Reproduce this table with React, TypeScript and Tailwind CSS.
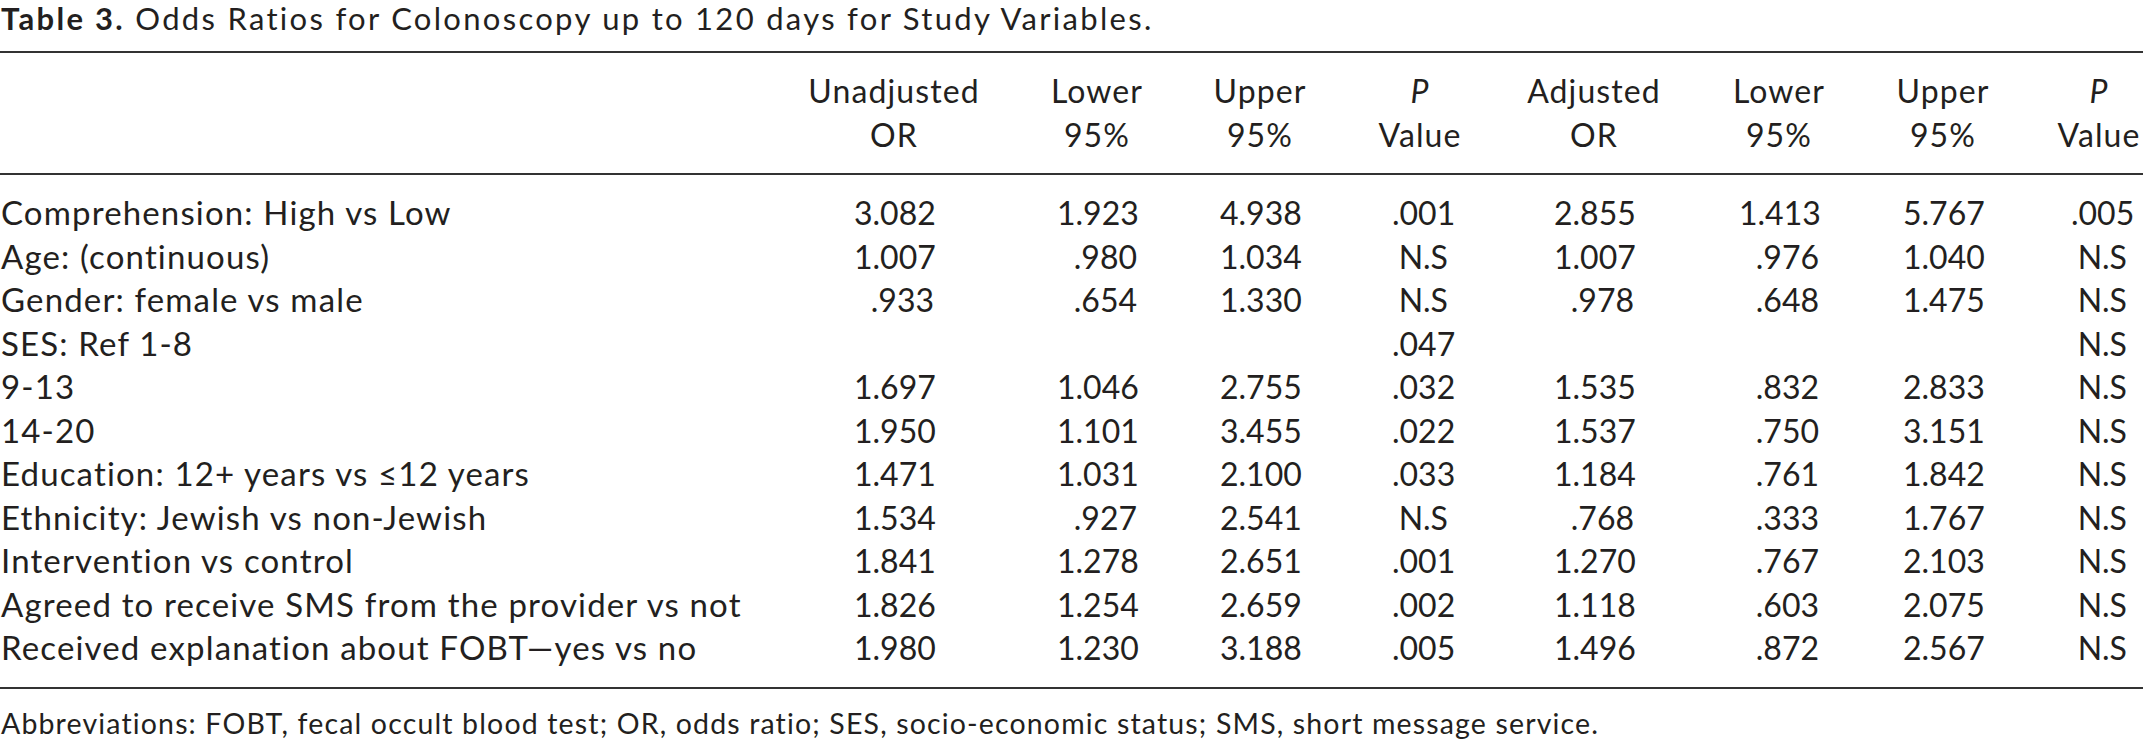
const rows: [string, string[]][] = [
  ['Comprehension: High vs Low', ['3.082', '1.923', '4.938', '.001', '2.855', '1.413', '5.767', '.005']],
  ['Age: (continuous)', ['1.007', '.980', '1.034', 'N.S', '1.007', '.976', '1.040', 'N.S']],
  ['Gender: female vs male', ['.933', '.654', '1.330', 'N.S', '.978', '.648', '1.475', 'N.S']],
  ['SES: Ref 1-8', ['', '', '', '.047', '', '', '', 'N.S']],
  ['9-13', ['1.697', '1.046', '2.755', '.032', '1.535', '.832', '2.833', 'N.S']],
  ['14-20', ['1.950', '1.101', '3.455', '.022', '1.537', '.750', '3.151', 'N.S']],
  ['Education: 12+ years vs \u226412 years', ['1.471', '1.031', '2.100', '.033', '1.184', '.761', '1.842', 'N.S']],
  ['Ethnicity: Jewish vs non-Jewish', ['1.534', '.927', '2.541', 'N.S', '.768', '.333', '1.767', 'N.S']],
  ['Intervention vs control', ['1.841', '1.278', '2.651', '.001', '1.270', '.767', '2.103', 'N.S']],
  ['Agreed to receive SMS from the provider vs not', ['1.826', '1.254', '2.659', '.002', '1.118', '.603', '2.075', 'N.S']],
  ['Received explanation about FOBT\u2014yes vs no', ['1.980', '1.230', '3.188', '.005', '1.496', '.872', '2.567', 'N.S']],
];

const headers: [string, string][] = [
  ['Unadjusted', 'OR'],
  ['Lower', '95%'],
  ['Upper', '95%'],
  ['P', 'Value'],
  ['Adjusted', 'OR'],
  ['Lower', '95%'],
  ['Upper', '95%'],
  ['P', 'Value'],
];

// column centres follow the printed table; the last column runs past the page edge
const grid = 'grid w-[2200px] grid-cols-[792px_204px_202px_124px_196px_152px_218px_110px_202px]';

export default function App() {
  return (
    <div className="w-[2143px] overflow-hidden bg-white font-['Lato',sans-serif] text-[#231f20]">
      <p className="mb-[14px] whitespace-nowrap pl-[1px] text-[31px] leading-[37px] tracking-[2.3px]">
        <span className="font-bold">Table 3.</span> Odds Ratios for Colonoscopy up to 120 days for Study Variables.
      </p>

      <div className="border-t-2 border-[#333] pb-[16px] pt-[16px]">
        <div className={grid}>
          <div />
          {headers.map(([top, bottom], i) => (
            <div key={i} className="text-center text-[32px] leading-[44px] tracking-[1.1px]">
              <div className={top === 'P' ? 'italic' : ''}>{top}</div>
              <div>{bottom}</div>
            </div>
          ))}
        </div>
      </div>

      <div className="border-t-2 border-[#333] pb-[17px] pt-[16px]">
        {rows.map(([label, values]) => (
          <div key={label} className={`${grid} leading-[43.5px]`}>
            <div className="whitespace-nowrap pl-[1px] text-[33px] tracking-[1.15px]">{label}</div>
            {values.map((v, i) => (
              <div key={i} className="flex justify-center text-[32px]">
                <span className={`${i === 3 || i === 7 ? 'w-[56px]' : 'w-[80px]'} whitespace-nowrap text-right`}>{v}</span>
              </div>
            ))}
          </div>
        ))}
      </div>

      <div className="border-t-2 border-[#333] pt-[18px]">
        <p className="whitespace-nowrap pl-[1px] text-[28.5px] leading-[32px] tracking-[1.15px]">
          Abbreviations: FOBT, fecal occult blood test; OR, odds ratio; SES, socio-economic status; SMS, short message service.
        </p>
      </div>
    </div>
  );
}
